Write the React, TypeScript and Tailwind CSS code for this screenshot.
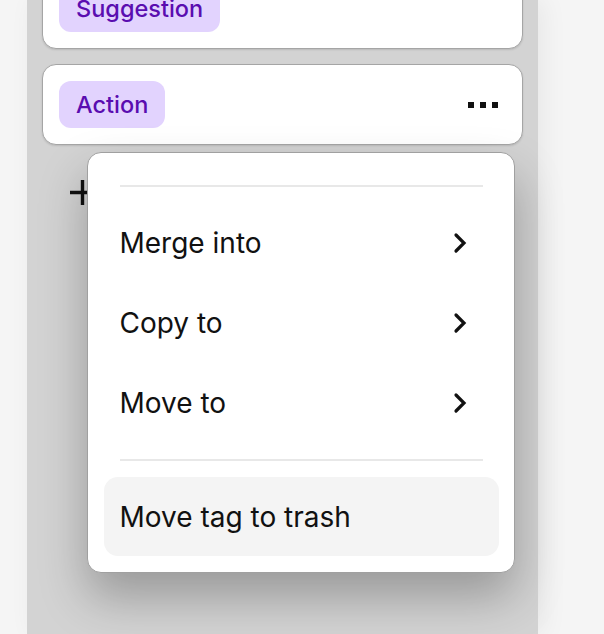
const menuItems = ["Merge into", "Copy to", "Move to"];

function Chevron() {
	return (
		<svg width="14" height="22" viewBox="0 0 14 22" fill="none">
			<path
				d="M3 3 L11 11 L3 19"
				stroke="#111"
				strokeWidth="3.2"
				strokeLinecap="round"
				strokeLinejoin="miter"
			/>
		</svg>
	);
}

function PlusIcon() {
	return (
		<svg width="27" height="27" viewBox="0 0 27 27" fill="none">
			<path d="M13.5 1 V26 M1 13.5 H26" stroke="#111" strokeWidth="3.4" />
		</svg>
	);
}

function Dots() {
	return (
		<div className="flex items-center gap-[6px]">
			<span className="h-[6px] w-[6px] bg-[#111]" />
			<span className="h-[6px] w-[6px] bg-[#111]" />
			<span className="h-[6px] w-[6px] bg-[#111]" />
		</div>
	);
}

function TagCard({ label, showMenu }: { label: string; showMenu?: boolean }) {
	return (
		<div className="flex h-[81px] items-center justify-between rounded-[14px] border-[1.5px] border-[#a5a5a5] bg-white pl-[16px] pr-[24px] shadow-[0_1px_2px_rgba(0,0,0,0.12)]">
			<span className="flex h-[47px] items-center rounded-[12px] bg-[#e2d3fe] px-[17px] text-[23.5px] font-medium text-[#5a0db0]">
				{label}
			</span>
			{showMenu && <Dots />}
		</div>
	);
}

export default function App() {
	return (
		<div
			className="flex h-[634px] w-[604px] overflow-hidden bg-[#f5f5f5]"
			style={{ fontFamily: "Inter, 'Noto Sans', sans-serif" }}
		>
			<div className="w-[27px] shrink-0" />
			<div className="relative w-[511px] shrink-0 bg-[#d3d3d3] px-[15px] shadow-[6px_0_24px_rgba(0,0,0,0.06)]">
				<div className="mt-[-32px] flex flex-col gap-[15px]">
					<TagCard label="Suggestion" />
					<TagCard label="Action" showMenu />
				</div>
				<div className="mt-[34px] flex items-center pl-[27px]">
					<PlusIcon />
				</div>

				{/* dropdown menu */}
				<div className="absolute left-[60px] top-[152px] w-[428px] rounded-[14px] border-[1.5px] border-[#a0a0a0] bg-white px-[15.5px] pt-[32px] pb-[16px] text-[#111] shadow-[0_24px_48px_rgba(0,0,0,0.28)]">
					<div className="mx-[16px] h-[2px] bg-[#e8e8e8]" />
					<div className="py-[16px]">
						{menuItems.map((item) => (
							<div
								key={item}
								className="flex h-[80px] items-center justify-between pl-[16px] pr-[32px] text-[28px]"
							>
								<span>{item}</span>
								<Chevron />
							</div>
						))}
					</div>
					<div className="mx-[16px] h-[2px] bg-[#e8e8e8]" />
					<div className="mt-[16px] flex h-[79px] items-center rounded-[14px] bg-[#f4f4f4] pl-[16px] text-[28px]">
						Move tag to trash
					</div>
				</div>
			</div>
		</div>
	);
}
